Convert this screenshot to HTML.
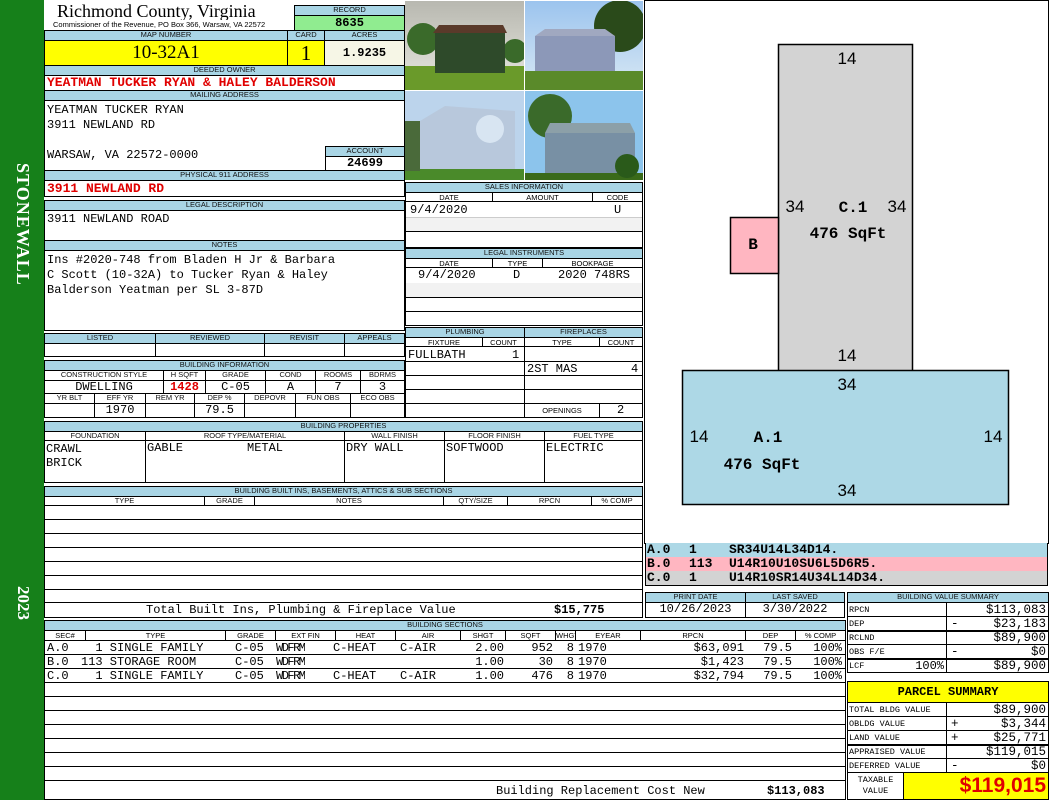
<!DOCTYPE html>
<html><head><meta charset="utf-8"><style>
*{margin:0;padding:0;box-sizing:border-box}
body{width:1050px;height:800px;position:relative;background:#fff;overflow:hidden;font-family:"Liberation Mono",monospace}
.a{position:absolute;white-space:nowrap;overflow:hidden}
.b{position:absolute;border:1px solid #000;white-space:nowrap;overflow:hidden}
.l{position:absolute;border:1px solid #000;background:#a9d5e5;font:7.5px/8px "Liberation Sans",sans-serif;text-align:center;overflow:hidden;white-space:nowrap;color:#111}
.m{font-size:12px;line-height:13px}
.r{color:#e00000;font-weight:bold}
.c{text-align:center}
.rt{text-align:right}
.h{position:absolute;left:0;right:0;border-top:1px solid #000}
</style></head><body>
<div class="a" style="left:0;top:0;width:44px;height:800px;background:#16801a"></div>
<div class="a" style="left:9px;top:163px;width:24px;height:155px;color:#fff;font:bold 18px 'Liberation Serif',serif;writing-mode:vertical-rl;letter-spacing:1px">STONEWALL</div>
<div class="a" style="left:9px;top:586px;width:24px;height:42px;color:#fff;font:bold 17px 'Liberation Serif',serif;writing-mode:vertical-rl">2023</div>

<div class="a" style="left:57px;top:1px;font:18px/20px 'Liberation Serif',serif">Richmond County, Virginia</div>
<div class="a" style="left:53px;top:20px;font:7.5px/9px 'Liberation Sans',sans-serif;background:#fff">Commissioner of the Revenue, PO Box 366, Warsaw, VA 22572</div>
<div class="l" style="left:294px;top:5px;width:111px;height:11px">RECORD</div>
<div class="b c" style="left:294px;top:15px;width:111px;height:16px;background:#90ec90;font:bold 12px/14px 'Liberation Mono'">8635</div>
<div class="l" style="left:44px;top:30px;width:244px;height:11px">MAP NUMBER</div>
<div class="l" style="left:287px;top:30px;width:38px;height:11px">CARD</div>
<div class="l" style="left:324px;top:30px;width:81px;height:11px">ACRES</div>
<div class="b c" style="left:44px;top:40px;width:244px;height:26px;background:#ffff00;font:19px/24px 'Liberation Serif',serif">10-32A1</div>
<div class="b c" style="left:287px;top:40px;width:38px;height:26px;background:#ffff00;font:21px/24px 'Liberation Serif',serif">1</div>
<div class="b c" style="left:324px;top:40px;width:81px;height:26px;background:#f6f6e6;font:bold 12px/24px 'Liberation Mono'">1.9235</div>
<div class="l" style="left:44px;top:65px;width:361px;height:11px">DEEDED OWNER</div>
<div class="b r" style="left:44px;top:75px;width:361px;height:16px;font-size:13px;line-height:14px;padding-left:2px">YEATMAN TUCKER RYAN &amp; HALEY BALDERSON</div>
<div class="l" style="left:44px;top:90px;width:361px;height:11px">MAILING ADDRESS</div>
<div class="b m" style="left:44px;top:100px;width:361px;height:71px;padding:2px 0 0 2px;line-height:15px">YEATMAN TUCKER RYAN<br>3911 NEWLAND RD<br><br>WARSAW, VA 22572-0000</div>
<div class="l" style="left:325px;top:146px;width:80px;height:11px">ACCOUNT</div>
<div class="b c" style="left:325px;top:156px;width:80px;height:15px;font:bold 12px/13px 'Liberation Mono'">24699</div>
<div class="l" style="left:44px;top:170px;width:361px;height:11px">PHYSICAL 911 ADDRESS</div>
<div class="b r" style="left:44px;top:180px;width:361px;height:17px;font-size:13px;line-height:15px;padding-left:2px">3911 NEWLAND RD</div>
<div class="l" style="left:44px;top:200px;width:361px;height:11px">LEGAL DESCRIPTION</div>
<div class="b m" style="left:44px;top:210px;width:361px;height:31px;padding:2px 0 0 2px">3911 NEWLAND ROAD</div>
<div class="l" style="left:44px;top:240px;width:361px;height:11px">NOTES</div>
<div class="b m" style="left:44px;top:250px;width:361px;height:81px;padding:2px 0 0 2px;line-height:15px">Ins #2020-748 from Bladen H Jr &amp; Barbara<br>C Scott (10-32A) to Tucker Ryan &amp; Haley<br>Balderson Yeatman per SL 3-87D</div>

<div class="l" style="left:44px;top:333px;width:112px;height:11px">LISTED</div>
<div class="l" style="left:155px;top:333px;width:110px;height:11px">REVIEWED</div>
<div class="l" style="left:264px;top:333px;width:81px;height:11px">REVISIT</div>
<div class="l" style="left:344px;top:333px;width:61px;height:11px">APPEALS</div>
<div class="b" style="left:44px;top:343px;width:112px;height:14px"></div>
<div class="b" style="left:155px;top:343px;width:110px;height:14px"></div>
<div class="b" style="left:264px;top:343px;width:81px;height:14px"></div>
<div class="b" style="left:344px;top:343px;width:61px;height:14px"></div>

<div class="l" style="left:44px;top:360px;width:361px;height:11px">BUILDING INFORMATION</div>
<div class="l" style="left:44px;top:370px;width:120px;height:11px;background:#fff">CONSTRUCTION STYLE</div>
<div class="l" style="left:163px;top:370px;width:43px;height:11px;background:#fff">H SQFT</div>
<div class="l" style="left:205px;top:370px;width:61px;height:11px;background:#fff">GRADE</div>
<div class="l" style="left:265px;top:370px;width:51px;height:11px;background:#fff">COND</div>
<div class="l" style="left:315px;top:370px;width:46px;height:11px;background:#fff">ROOMS</div>
<div class="l" style="left:360px;top:370px;width:45px;height:11px;background:#fff">BDRMS</div>
<div class="b m c" style="left:44px;top:380px;width:120px;height:14px">DWELLING</div>
<div class="b m c r" style="left:163px;top:380px;width:43px;height:14px">1428</div>
<div class="b m c" style="left:205px;top:380px;width:61px;height:14px">C-05</div>
<div class="b m c" style="left:265px;top:380px;width:51px;height:14px">A</div>
<div class="b m c" style="left:315px;top:380px;width:46px;height:14px">7</div>
<div class="b m c" style="left:360px;top:380px;width:45px;height:14px">3</div>
<div class="l" style="left:44px;top:393px;width:51px;height:11px;background:#fff">YR BLT</div>
<div class="l" style="left:94px;top:393px;width:52px;height:11px;background:#fff">EFF YR</div>
<div class="l" style="left:145px;top:393px;width:50px;height:11px;background:#fff">REM YR</div>
<div class="l" style="left:194px;top:393px;width:51px;height:11px;background:#fff">DEP %</div>
<div class="l" style="left:244px;top:393px;width:52px;height:11px;background:#fff">DEPOVR</div>
<div class="l" style="left:295px;top:393px;width:56px;height:11px;background:#fff">FUN OBS</div>
<div class="l" style="left:350px;top:393px;width:55px;height:11px;background:#fff">ECO OBS</div>
<div class="b" style="left:44px;top:403px;width:51px;height:15px"></div>
<div class="b m c" style="left:94px;top:403px;width:52px;height:15px">1970</div>
<div class="b" style="left:145px;top:403px;width:50px;height:15px"></div>
<div class="b m c" style="left:194px;top:403px;width:51px;height:15px">79.5</div>
<div class="b" style="left:244px;top:403px;width:52px;height:15px"></div>
<div class="b" style="left:295px;top:403px;width:56px;height:15px"></div>
<div class="b" style="left:350px;top:403px;width:55px;height:15px"></div>

<div class="l" style="left:44px;top:421px;width:599px;height:11px">BUILDING PROPERTIES</div>
<div class="l" style="left:44px;top:431px;width:102px;height:10px;background:#fff">FOUNDATION</div>
<div class="l" style="left:145px;top:431px;width:200px;height:10px;background:#fff">ROOF TYPE/MATERIAL</div>
<div class="l" style="left:344px;top:431px;width:101px;height:10px;background:#fff">WALL FINISH</div>
<div class="l" style="left:444px;top:431px;width:101px;height:10px;background:#fff">FLOOR FINISH</div>
<div class="l" style="left:544px;top:431px;width:99px;height:10px;background:#fff">FUEL TYPE</div>
<div class="b m" style="left:44px;top:440px;width:102px;height:43px;padding:1px 0 0 1px;line-height:14px">CRAWL<br>BRICK</div>
<div class="b m" style="left:145px;top:440px;width:200px;height:43px;padding:1px 0 0 1px">GABLE<span style="position:absolute;left:101px">METAL</span></div>
<div class="b m" style="left:344px;top:440px;width:101px;height:43px;padding:1px 0 0 1px">DRY WALL</div>
<div class="b m" style="left:444px;top:440px;width:101px;height:43px;padding:1px 0 0 1px">SOFTWOOD</div>
<div class="b m" style="left:544px;top:440px;width:99px;height:43px;padding:1px 0 0 1px">ELECTRIC</div>

<div class="l" style="left:44px;top:486px;width:599px;height:11px">BUILDING BUILT INS, BASEMENTS, ATTICS &amp; SUB SECTIONS</div>
<div class="l" style="left:44px;top:496px;width:161px;height:10px;background:#fff">TYPE</div>
<div class="l" style="left:204px;top:496px;width:51px;height:10px;background:#fff">GRADE</div>
<div class="l" style="left:254px;top:496px;width:190px;height:10px;background:#fff">NOTES</div>
<div class="l" style="left:443px;top:496px;width:65px;height:10px;background:#fff">QTY/SIZE</div>
<div class="l" style="left:507px;top:496px;width:85px;height:10px;background:#fff">RPCN</div>
<div class="l" style="left:591px;top:496px;width:52px;height:10px;background:#fff">% COMP</div>
<div class="b" style="left:44px;top:505px;width:599px;height:113px">
<div class="h" style="top:13px"></div><div class="h" style="top:27px"></div><div class="h" style="top:41px"></div><div class="h" style="top:55px"></div><div class="h" style="top:69px"></div><div class="h" style="top:83px"></div><div class="h" style="top:96px"></div>
<div class="a m" style="left:101px;top:98px">Total Built Ins, Plumbing &amp; Fireplace Value</div>
<div class="a m" style="left:509px;top:98px;font-weight:bold">$15,775</div>
</div>

<div class="l" style="left:44px;top:620px;width:802px;height:11px">BUILDING SECTIONS</div>
<div class="b" style="left:44px;top:630px;width:802px;height:170px;font-size:12px">
<div class="h" style="top:9px"></div><div class="h" style="top:23px"></div><div class="h" style="top:37px"></div><div class="h" style="top:51px"></div><div class="h" style="top:65px"></div><div class="h" style="top:79px"></div><div class="h" style="top:93px"></div><div class="h" style="top:107px"></div><div class="h" style="top:121px"></div><div class="h" style="top:135px"></div><div class="h" style="top:149px"></div>
<div class="a" style="left:0;top:0;width:800px;height:9px;font:7.5px/9px 'Liberation Sans',sans-serif">
<span class="a c" style="left:0;width:41px;border-right:1px solid #000">SEC#</span><span class="a c" style="left:41px;width:140px;border-right:1px solid #000">TYPE</span><span class="a c" style="left:181px;width:50px;border-right:1px solid #000">GRADE</span><span class="a c" style="left:231px;width:60px;border-right:1px solid #000">EXT FIN</span><span class="a c" style="left:291px;width:60px;border-right:1px solid #000">HEAT</span><span class="a c" style="left:351px;width:65px;border-right:1px solid #000">AIR</span><span class="a c" style="left:416px;width:45px;border-right:1px solid #000">SHGT</span><span class="a c" style="left:461px;width:50px;border-right:1px solid #000">SQFT</span><span class="a c" style="left:511px;width:20px;border-right:1px solid #000">WHGT</span><span class="a c" style="left:531px;width:65px;border-right:1px solid #000">EYEAR</span><span class="a c" style="left:596px;width:105px;border-right:1px solid #000">RPCN</span><span class="a c" style="left:701px;width:50px;border-right:1px solid #000">DEP</span><span class="a c" style="left:751px;width:49px">% COMP</span></div>
<div class="a" style="left:2px;top:10px;line-height:14px">A.0<br>B.0<br>C.0</div>
<div class="a" style="left:36px;top:10px;line-height:14px">&nbsp;&nbsp;1 SINGLE FAMILY<br>113 STORAGE ROOM<br>&nbsp;&nbsp;1 SINGLE FAMILY</div>
<div class="a" style="left:190px;top:10px;line-height:14px">C-05<br>C-05<br>C-05</div>
<div class="a" style="left:231px;top:10px;line-height:14px;letter-spacing:-1.5px">WDFRM<br>WDFRM<br>WDFRM</div>
<div class="a" style="left:288px;top:10px;line-height:14px">C-HEAT<br><br>C-HEAT</div>
<div class="a" style="left:355px;top:10px;line-height:14px">C-AIR<br><br>C-AIR</div>
<div class="a rt" style="left:416px;width:43px;top:10px;line-height:14px">2.00<br>1.00<br>1.00</div>
<div class="a rt" style="left:461px;width:47px;top:10px;line-height:14px">952<br>30<br>476</div>
<div class="a rt" style="left:511px;width:18px;top:10px;line-height:14px">8<br>8<br>8</div>
<div class="a" style="left:533px;top:10px;line-height:14px">1970<br>1970<br>1970</div>
<div class="a rt" style="left:596px;width:103px;top:10px;line-height:14px">$63,091<br>$1,423<br>$32,794</div>
<div class="a rt" style="left:701px;width:46px;top:10px;line-height:14px">79.5<br>79.5<br>79.5</div>
<div class="a rt" style="left:751px;width:46px;top:10px;line-height:14px">100%<br>100%<br>100%</div>
<div class="a" style="left:451px;top:153px">Building Replacement Cost New</div>
<div class="a" style="left:722px;top:153px;font-weight:bold">$113,083</div>
</div>

<svg class="a" style="left:405px;top:1px" width="238" height="179">
<defs><linearGradient id="s1" x1="0" y1="0" x2="0" y2="1"><stop offset="0" stop-color="#b8b8b0"/><stop offset="1" stop-color="#e8e8e0"/></linearGradient>
<linearGradient id="s2" x1="0" y1="0" x2="0" y2="1"><stop offset="0" stop-color="#9cc4ee"/><stop offset="1" stop-color="#d8e8f4"/></linearGradient></defs>
<rect x="0" y="0" width="119" height="89" fill="url(#s1)"/><rect x="0" y="65" width="119" height="24" fill="#6a9a2a"/>
<circle cx="18" cy="38" r="16" fill="#3a6a2a"/><circle cx="110" cy="50" r="12" fill="#3a6a2a"/>
<rect x="30" y="32" width="70" height="40" fill="#2e4a2a"/><polygon points="28,32 102,32 98,24 34,24" fill="#5a3a2a"/>
<rect x="120" y="0" width="118" height="89" fill="url(#s2)"/><rect x="120" y="70" width="118" height="19" fill="#5a8a2a"/>
<circle cx="215" cy="25" r="26" fill="#2a4a1a"/><rect x="130" y="35" width="80" height="35" fill="#8c98b8"/><polygon points="130,35 210,35 200,28 140,28" fill="#a0a8c0"/>
<rect x="0" y="90" width="119" height="89" fill="#bcd4ec"/><rect x="0" y="168" width="119" height="11" fill="#4a8a2a"/><rect x="0" y="120" width="15" height="50" fill="#4a6a3a"/>
<polygon points="15,120 40,105 110,110 110,168 15,168" fill="#b8c8dc"/><circle cx="85" cy="128" r="14" fill="#e0ecf8" opacity=".8"/>
<rect x="120" y="90" width="118" height="89" fill="#8cc4ec"/><circle cx="145" cy="115" r="22" fill="#3a6a2a"/>
<rect x="140" y="132" width="90" height="40" fill="#7890a4"/><polygon points="140,132 230,132 225,122 145,122" fill="#8ca0a8"/><rect x="120" y="172" width="118" height="7" fill="#3a6a1a"/><circle cx="222" cy="165" r="12" fill="#2a5a1a"/>
<line x1="119.5" y1="0" x2="119.5" y2="179" stroke="#fff"/><line x1="0" y1="89.5" x2="238" y2="89.5" stroke="#fff"/>
</svg>

<div class="l" style="left:405px;top:182px;width:238px;height:11px">SALES INFORMATION</div>
<div class="b" style="left:405px;top:192px;width:238px;height:56px">
<div class="a" style="left:0;top:0;width:236px;height:9px;font:7.5px/9px 'Liberation Sans',sans-serif;border-bottom:1px solid #000"><span class="a c" style="left:0;width:87px;border-right:1px solid #000">DATE</span><span class="a c" style="left:87px;width:100px;border-right:1px solid #000">AMOUNT</span><span class="a c" style="left:187px;width:49px">CODE</span></div>
<div class="a m" style="left:4px;top:11px">9/4/2020</div><div class="a m" style="left:208px;top:11px">U</div>
<div class="a" style="left:0;top:24px;width:236px;height:14px;background:#f2f2f2;border-top:1px solid #ccc"></div>
<div class="h" style="top:38px"></div>
</div>
<div class="l" style="left:405px;top:248px;width:238px;height:11px">LEGAL INSTRUMENTS</div>
<div class="b" style="left:405px;top:258px;width:238px;height:68px">
<div class="a" style="left:0;top:0;width:236px;height:9px;font:7.5px/9px 'Liberation Sans',sans-serif;border-bottom:1px solid #000"><span class="a c" style="left:0;width:87px;border-right:1px solid #000">DATE</span><span class="a c" style="left:87px;width:50px;border-right:1px solid #000">TYPE</span><span class="a c" style="left:137px;width:99px">BOOKPAGE</span></div>
<div class="a m" style="left:12px;top:10px">9/4/2020</div><div class="a m" style="left:107px;top:10px">D</div><div class="a m" style="left:152px;top:10px">2020 748RS</div>
<div class="a" style="left:0;top:24px;width:236px;height:14px;background:#f2f2f2"></div>
<div class="h" style="top:38px"></div><div class="h" style="top:52px"></div>
</div>
<div class="l" style="left:405px;top:327px;width:120px;height:11px">PLUMBING</div>
<div class="l" style="left:524px;top:327px;width:119px;height:11px">FIREPLACES</div>
<div class="b" style="left:405px;top:337px;width:120px;height:81px">
<div class="a" style="left:0;top:0;width:118px;height:9px;font:7.5px/9px 'Liberation Sans',sans-serif;border-bottom:1px solid #000"><span class="a c" style="left:0;width:77px;border-right:1px solid #000">FIXTURE</span><span class="a c" style="left:77px;width:41px">COUNT</span></div>
<div class="a m" style="left:2px;top:11px">FULLBATH</div><div class="a m" style="left:106px;top:11px">1</div>
<div class="h" style="top:23px"></div><div class="h" style="top:37px"></div><div class="h" style="top:51px"></div><div class="h" style="top:65px"></div>
</div>
<div class="b" style="left:524px;top:337px;width:119px;height:81px">
<div class="a" style="left:0;top:0;width:117px;height:9px;font:7.5px/9px 'Liberation Sans',sans-serif;border-bottom:1px solid #000"><span class="a c" style="left:0;width:75px;border-right:1px solid #000">TYPE</span><span class="a c" style="left:75px;width:42px">COUNT</span></div>
<div class="a m" style="left:2px;top:25px">2ST MAS</div><div class="a m" style="left:106px;top:25px">4</div>
<div class="h" style="top:23px"></div><div class="h" style="top:37px"></div><div class="h" style="top:51px"></div><div class="h" style="top:65px"></div>
<div class="a c" style="left:0;top:66px;width:75px;font:7.5px/13px 'Liberation Sans',sans-serif;border-right:1px solid #000">OPENINGS</div><div class="a m" style="left:92px;top:66px">2</div>
</div>

<div class="b" style="left:644px;top:0;width:405px;height:544px"></div>
<svg class="a" style="left:645px;top:0" width="403" height="543">
<rect x="133.5" y="44.5" width="134" height="327" fill="#d3d3d3" stroke="#000" stroke-width="1.5"/>
<rect x="85.5" y="217.5" width="48" height="56" fill="#ffb6c1" stroke="#000" stroke-width="1.5"/>
<rect x="37.5" y="370.5" width="326" height="134" fill="#add8e6" stroke="#000" stroke-width="1.5"/>
<g font-family="Liberation Sans,sans-serif" font-size="17" text-anchor="middle">
<text x="202" y="64">14</text><text x="202" y="361">14</text><text x="202" y="390">34</text><text x="202" y="496">34</text>
<text x="150" y="212">34</text><text x="252" y="212">34</text><text x="54" y="442">14</text><text x="348" y="442">14</text></g>
<g font-family="Liberation Mono,monospace" font-size="16" font-weight="bold" text-anchor="middle">
<text x="208" y="212">C.1</text><text x="203" y="238">476 SqFt</text><text x="108" y="249">B</text>
<text x="123" y="442">A.1</text><text x="117" y="469">476 SqFt</text></g>
</svg>
<div class="a" style="left:645px;top:543px;width:403px;height:43px;font:bold 13px/14px 'Liberation Mono';border:1px solid #000;border-top:0">
<div style="background:#add8e6;height:14px"><span class="a" style="left:1px">A.0</span><span class="a" style="left:43px">1</span><span class="a" style="left:83px">SR34U14L34D14.</span></div>
<div class="a" style="top:14px;left:0;width:403px;height:14px;background:#ffb6c1"><span class="a" style="left:1px">B.0</span><span class="a" style="left:43px">113</span><span class="a" style="left:83px">U14R10U10SU6L5D6R5.</span></div>
<div class="a" style="top:28px;left:0;width:403px;height:14px;background:#d3d3d3"><span class="a" style="left:1px">C.0</span><span class="a" style="left:43px">1</span><span class="a" style="left:83px">U14R10SR14U34L14D34.</span></div>
</div>

<div class="l" style="left:645px;top:592px;width:101px;height:11px">PRINT DATE</div>
<div class="l" style="left:745px;top:592px;width:100px;height:11px">LAST SAVED</div>
<div class="b m c" style="left:645px;top:602px;width:101px;height:16px">10/26/2023</div>
<div class="b m c" style="left:745px;top:602px;width:100px;height:16px">3/30/2022</div>

<div class="l" style="left:847px;top:592px;width:202px;height:11px">BUILDING VALUE SUMMARY</div>
<div class="b" style="left:847px;top:602px;width:202px;height:71px;font-size:12.5px">
<div class="h" style="top:13px"></div><div class="h" style="top:27px;border-top-width:2px"></div><div class="h" style="top:41px"></div><div class="h" style="top:55px;border-top-width:2px"></div>
<div class="a" style="left:98px;top:0;height:71px;border-left:1px solid #000"></div>
<div class="a" style="left:1px;top:0;font-size:8.5px;line-height:14px">RPCN<br>DEP<br>RCLND<br>OBS F/E<br>LCF</div>
<div class="a rt" style="left:40px;width:56px;top:0;line-height:14px;font-size:12px"><br><br><br><br>100%</div>
<div class="a" style="left:103px;top:0;line-height:14px"><br>-<br><br>-</div>
<div class="a rt" style="left:100px;width:98px;top:0;line-height:14px">$113,083<br>$23,183<br>$89,900<br>$0<br>$89,900</div>
</div>
<div class="b c" style="left:847px;top:681px;width:202px;height:22px;background:#ffff00;font:bold 12px/20px 'Liberation Mono'">PARCEL SUMMARY</div>
<div class="b" style="left:847px;top:702px;width:202px;height:71px;font-size:12.5px">
<div class="h" style="top:13px"></div><div class="h" style="top:27px"></div><div class="h" style="top:41px;border-top-width:2px"></div><div class="h" style="top:55px"></div>
<div class="a" style="left:1px;top:0;font-size:8.5px;line-height:14px">TOTAL BLDG VALUE<br>OBLDG VALUE<br>LAND VALUE<br>APPRAISED VALUE<br>DEFERRED VALUE</div>
<div class="a" style="left:98px;top:0;height:71px;border-left:1px solid #000"></div>
<div class="a" style="left:103px;top:0;line-height:14px"><br>+<br>+<br><br>-</div>
<div class="a rt" style="left:100px;width:98px;top:0;line-height:14px">$89,900<br>$3,344<br>$25,771<br>$119,015<br>$0</div>
</div>
<div class="b c" style="left:847px;top:772px;width:57px;height:28px;font:8.5px/11px 'Liberation Mono';padding-top:2px">TAXABLE<br>VALUE</div>
<div class="b rt" style="left:903px;top:772px;width:146px;height:28px;background:#ffff00;color:#e00000;font:bold 21px/26px 'Liberation Sans',sans-serif;padding-right:2px">$119,015</div>
</body></html>
